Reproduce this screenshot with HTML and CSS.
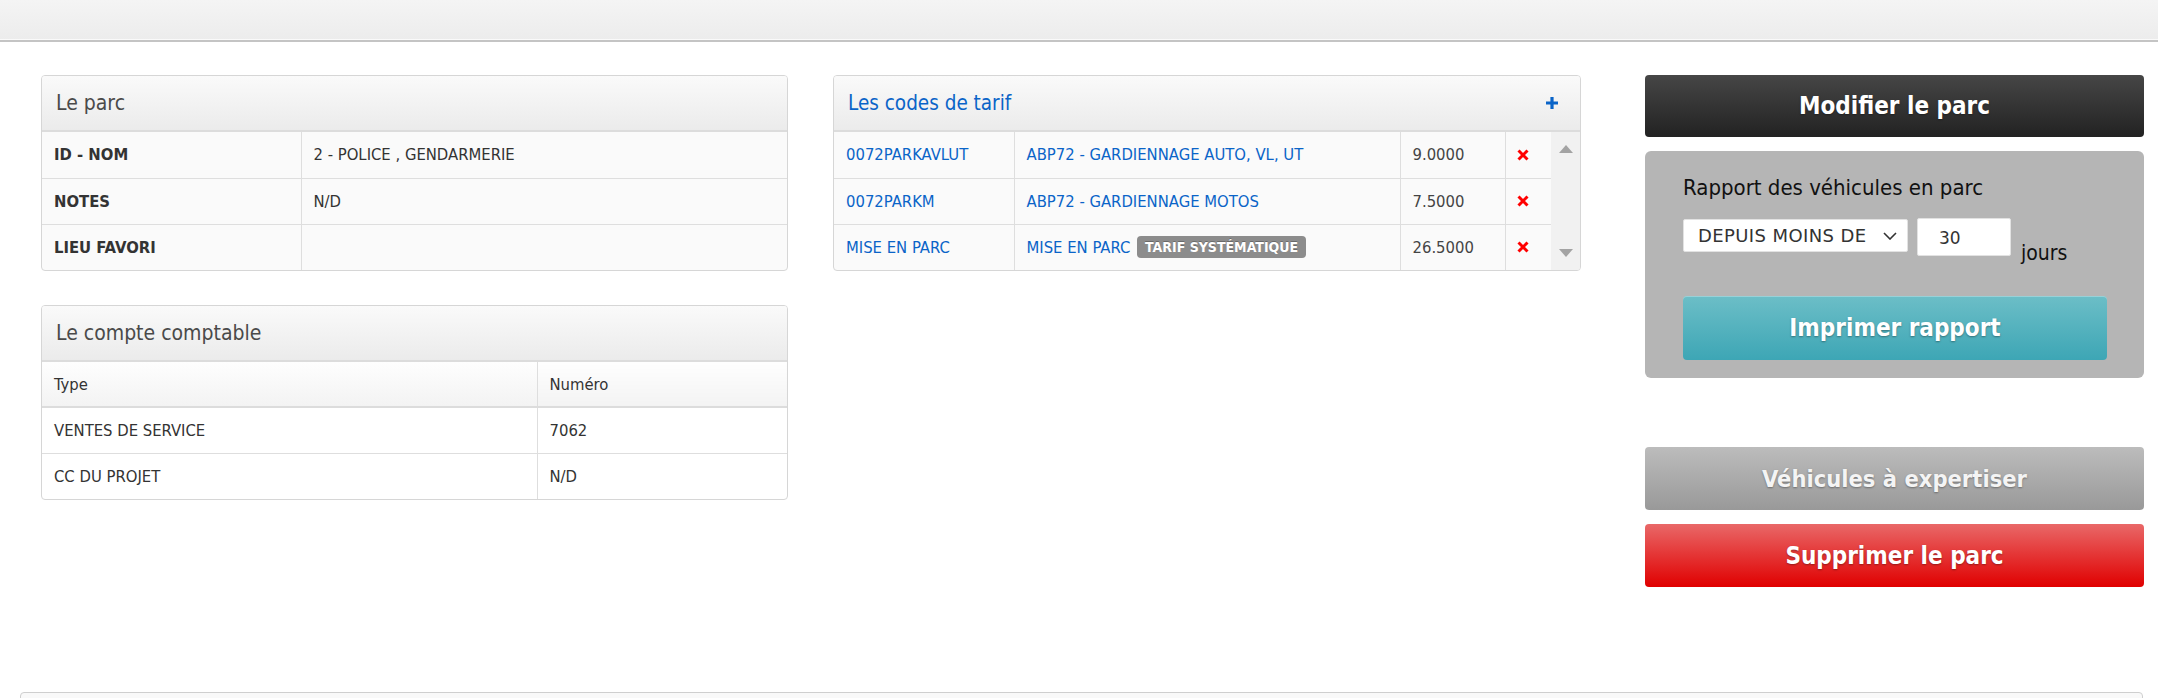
FILE: index.html
```html
<!DOCTYPE html>
<html lang="fr">
<head>
<meta charset="utf-8">
<title>Le parc</title>
<link rel="stylesheet" href="styles.css">
</head>
<body>
<div class="topbar"></div>
<main class="content">
  <div class="col col-left">
    <section class="panel">
      <header class="panel-head"><h2 class="panel-title">Le parc</h2></header>
      <table class="tbl tbl-parc">
        <tr><th>ID - NOM</th><td>2 - POLICE , GENDARMERIE</td></tr>
        <tr><th>NOTES</th><td>N/D</td></tr>
        <tr><th>LIEU FAVORI</th><td></td></tr>
      </table>
    </section>
    <section class="panel panel-compte">
      <header class="panel-head"><h2 class="panel-title">Le compte comptable</h2></header>
      <table class="tbl tbl-compte">
        <thead><tr><th>Type</th><th>Numéro</th></tr></thead>
        <tbody>
          <tr><td>VENTES DE SERVICE</td><td>7062</td></tr>
          <tr><td>CC DU PROJET</td><td>N/D</td></tr>
        </tbody>
      </table>
    </section>
  </div>

  <div class="col col-mid">
    <section class="panel">
      <header class="panel-head panel-head-flex">
        <h2 class="panel-title link">Les codes de tarif</h2>
        <svg class="plus" width="14" height="14" viewBox="0 0 14 14"><path d="M7 1v12M1 7h12" stroke="#0a64c8" stroke-width="3.2" fill="none"/></svg>
      </header>
      <div class="tarif-wrap">
        <table class="tbl tbl-tarif">
          <tr>
            <td class="c1 link">0072PARKAVLUT</td>
            <td class="c2 link">ABP72 - GARDIENNAGE AUTO, VL, UT</td>
            <td class="c3">9.0000</td>
            <td class="c4"><svg class="del" width="12" height="12" viewBox="0 0 12 12"><path d="M1.5 1.5l9 9M10.5 1.5l-9 9" stroke="#f00" stroke-width="3" fill="none"/></svg></td>
          </tr>
          <tr>
            <td class="c1 link">0072PARKM</td>
            <td class="c2 link">ABP72 - GARDIENNAGE MOTOS</td>
            <td class="c3">7.5000</td>
            <td class="c4"><svg class="del" width="12" height="12" viewBox="0 0 12 12"><path d="M1.5 1.5l9 9M10.5 1.5l-9 9" stroke="#f00" stroke-width="3" fill="none"/></svg></td>
          </tr>
          <tr>
            <td class="c1 link">MISE EN PARC</td>
            <td class="c2 link">MISE EN PARC <span class="badge">TARIF SYSTÉMATIQUE</span></td>
            <td class="c3">26.5000</td>
            <td class="c4"><svg class="del" width="12" height="12" viewBox="0 0 12 12"><path d="M1.5 1.5l9 9M10.5 1.5l-9 9" stroke="#f00" stroke-width="3" fill="none"/></svg></td>
          </tr>
        </table>
        <div class="scrollbar">
          <svg width="14" height="8" viewBox="0 0 14 8"><path d="M7 0L14 8H0z" fill="#a3a3a3"/></svg>
          <svg width="14" height="8" viewBox="0 0 14 8"><path d="M0 0H14L7 8z" fill="#a3a3a3"/></svg>
        </div>
      </div>
    </section>
  </div>

  <div class="col col-right">
    <button class="btn btn-dark">Modifier le parc</button>
    <div class="report">
      <div class="report-title">Rapport des véhicules en parc</div>
      <div class="report-form">
        <div class="select-wrap">
          <select class="select"><option>DEPUIS MOINS DE</option></select>
          <svg class="chev" width="14" height="8" viewBox="0 0 14 8"><path d="M1 1l6 6 6-6" stroke="#333" stroke-width="1.6" fill="none"/></svg>
        </div>
        <input class="days" type="text" value="30">
        <span class="jours">jours</span>
      </div>
      <button class="btn btn-teal">Imprimer rapport</button>
    </div>
    <button class="btn btn-gray">Véhicules à expertiser</button>
    <button class="btn btn-red">Supprimer le parc</button>
  </div>
</main>
<div class="footer-panel"></div>
</body>
</html>
```

FILE: styles.css
```css
* { box-sizing: border-box; }
html, body { margin: 0; padding: 0; background: #fff; }
body {
  font-family: "DejaVu Sans Condensed", "DejaVu Sans", sans-serif;
  font-stretch: condensed;
  color: #333;
  height: 698px;
  overflow: hidden;
}
.topbar {
  height: 42px;
  background: linear-gradient(#f4f4f4, #ececec);
  border-bottom: 2px solid #c4c4c4;
  box-shadow: inset 0 -1px 0 #fafafa;
}
.content {
  display: grid;
  grid-template-columns: 747px 748px 518px;
  column-gap: 45px;
  padding: 33px 0 0 41px;
  align-items: start;
  height: 650px;
}
.col-right { padding-left: 19px; display: flex; flex-direction: column; }

.panel {
  border: 1px solid #d6d6d6;
  border-radius: 4px;
  overflow: hidden;
  background: #fafafa;
}
.panel-compte { margin-top: 34px; background: #fff; }
.panel-head {
  height: 56px;
  padding: 0 14px;
  background: linear-gradient(#fafafa, #ebebeb);
  border-bottom: 2px solid #dcdcdc;
  display: flex;
  align-items: center;
}
.panel-head-flex { justify-content: space-between; padding-right: 21px; }
.panel-title {
  margin: 0;
  font-size: 21px;
  font-weight: normal;
  color: #4a4a4a;
}
.panel-title.link { color: #0a64c8; font-size: 20.5px; }
.plus { display: block; }

.tbl { width: 100%; border-collapse: collapse; font-size: 16.5px; }
.tbl th, .tbl td {
  height: 46px;
  padding: 0 12px;
  text-align: left;
  border-top: 1px solid #dedede;
  vertical-align: middle;
}
.tbl tr:first-child th, .tbl tr:first-child td { border-top: none; }
.tbl-parc th { width: 259px; font-weight: bold; border-right: 1px solid #dedede; color: #333; }
.tbl-parc td { color: #333; }
.tbl-compte thead th {
  font-weight: normal;
  background: linear-gradient(#fefefe, #f3f3f3);
  border-bottom: 2px solid #dcdcdc;
  height: 45px;
}
.tbl-compte th:first-child, .tbl-compte td:first-child { width: 495px; border-right: 1px solid #dedede; }
.tbl-compte tbody tr:first-child td { border-top: none; }
.tbl-compte td { color: #333; }

.link { color: #0a64c8; }
.tarif-wrap { display: flex; }
.tbl-tarif { flex: 1; }
.tbl-tarif .c1 { width: 180px; border-right: 1px solid #dedede; }
.tbl-tarif .c2 { width: 386px; border-right: 1px solid #dedede; }
.tbl-tarif .c3 { width: 105px; border-right: 1px solid #dedede; color: #444; }
.tbl-tarif .c4 { padding-left: 11px; }
.del { display: block; }
.badge {
  display: inline-block;
  background: #8c8c8c;
  color: #fff;
  font-weight: bold;
  font-size: 14px;
  line-height: 22px;
  padding: 0 8px;
  border-radius: 4px;
  margin-left: 2px;
  text-shadow: 0 -1px 0 rgba(0,0,0,.25);
  vertical-align: 1px;
}
.scrollbar {
  width: 29px;
  background: #f1f1f1;
  display: flex;
  flex-direction: column;
  justify-content: space-between;
  align-items: center;
  padding: 13px 0 13px;
}
.scrollbar svg { display: block; }

.btn {
  display: block;
  width: 100%;
  border: none;
  border-radius: 4px;
  color: #fff;
  font-family: "DejaVu Sans Condensed", "DejaVu Sans", sans-serif;
  font-stretch: condensed;
  font-weight: bold;
  font-size: 24px;
  cursor: pointer;
  text-shadow: 0 1px 2px rgba(0,0,0,.35);
}
.btn-dark { height: 62px; background: linear-gradient(#464646, #222); }
.btn-gray { height: 63px; margin-top: 69px; background: linear-gradient(#bcbcbc, #999); color: #f4f4f4; font-size: 23.5px; }
.btn-red { height: 63px; margin-top: 14px; background: linear-gradient(#e96868, #e00000); }
.btn-teal { height: 64px; background: linear-gradient(#6cbec7, #3da6b5); box-shadow: inset 0 1px 0 rgba(255,255,255,.3); }

.report {
  margin-top: 14px;
  height: 227px;
  background: #b5b5b5;
  border-radius: 6px;
  padding: 23px 37px 0 38px;
}
.report-title { font-size: 22px; color: #111; line-height: 28px; }
.report-form { display: flex; align-items: flex-start; margin-top: 17px; height: 77px; }
.select-wrap { position: relative; width: 225px; height: 33px; }
.select {
  appearance: none;
  -webkit-appearance: none;
  width: 100%;
  height: 33px;
  border: 1px solid #e2e2e2;
  border-radius: 2px;
  background: #fff;
  font-family: "DejaVu Sans", sans-serif;
  font-size: 18px;
  letter-spacing: 0.4px;
  color: #333;
  padding: 0 0 0 14px;
}
.chev { position: absolute; right: 11px; top: 13px; }
.days {
  width: 94px;
  height: 38px;
  margin-left: 9px;
  border: 1px solid #e2e2e2;
  border-radius: 2px;
  font-family: "DejaVu Sans", sans-serif;
  font-size: 17px;
  color: #333;
  padding: 2px 0 0 21px;
  margin-top: -1px;
}
.jours { font-size: 21px; color: #111; margin-left: 10px; margin-top: 22px; }

.footer-panel {
  position: absolute;
  left: 20px;
  right: 15px;
  top: 692px;
  height: 20px;
  border: 1px solid #cfcfcf;
  border-radius: 4px 4px 0 0;
  background: #f9f9f9;
}
```
